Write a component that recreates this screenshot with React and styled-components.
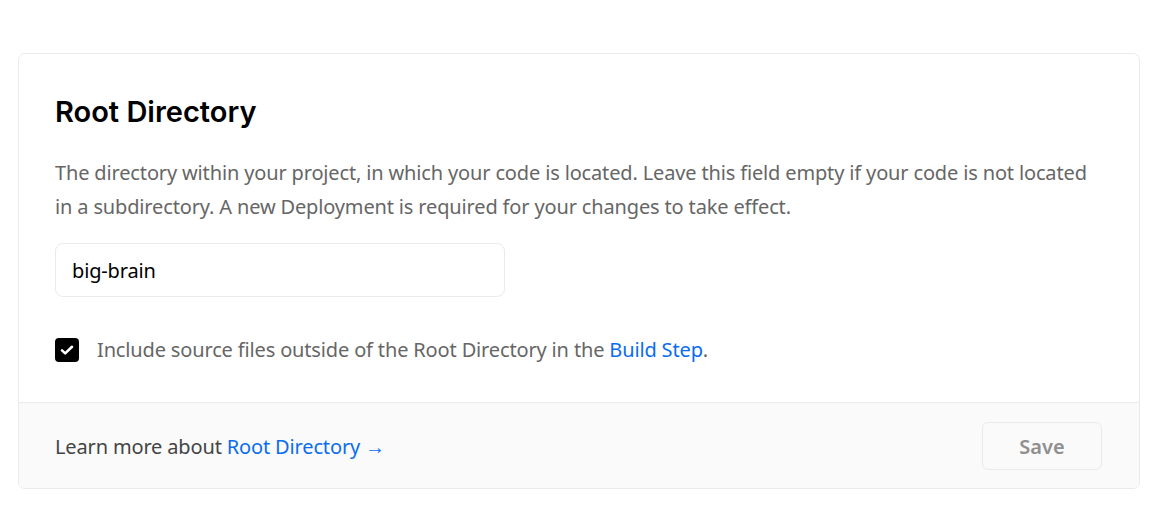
import React, { useState } from "react";
import styled, { createGlobalStyle } from "styled-components";

const GlobalStyle = createGlobalStyle`
	body {
		margin: 0;
		background: #fff;
		font-family: "Noto Sans", "Open Sans", sans-serif;
	}
`;

const Page = styled.div`
	padding: 53px 0 0 18px;
`;

const Card = styled.section`
	width: 1122px;
	box-sizing: border-box;
	border: 1px solid #eaeaea;
	border-radius: 7px;
	overflow: hidden;
	background: #fff;
`;

const Body = styled.div`
	padding: 40px 36px 40px;
	display: flex;
	flex-direction: column;
`;

const Title = styled.h2`
	margin: 0;
	font-family: Inter, "Noto Sans", sans-serif;
	font-size: 29px;
	line-height: 36px;
	font-weight: 600;
	color: #000;
`;

const Description = styled.p`
	margin: 26px 0 0;
	font-size: 20px;
	line-height: 34px;
	letter-spacing: -0.15px;
	color: #666;
`;

const Input = styled.input`
	margin-top: 19px;
	width: 450px;
	height: 54px;
	box-sizing: border-box;
	border: 1px solid #eaeaea;
	border-radius: 8px;
	padding: 0 16px;
	font-family: inherit;
	font-size: 20px;
	letter-spacing: -0.15px;
	color: #000;
	outline: none;
`;

const CheckRow = styled.label`
	margin-top: 41px;
	display: flex;
	align-items: center;
	gap: 18px;
	font-size: 20px;
	line-height: 24px;
	letter-spacing: -0.15px;
	color: #666;
	cursor: pointer;
`;

const Box = styled.span`
	width: 24px;
	height: 24px;
	flex-shrink: 0;
	border-radius: 4px;
	background: ${(p) => (p.checked ? "#000" : "#fff")};
	border: ${(p) => (p.checked ? "none" : "1px solid #ccc")};
	display: flex;
	align-items: center;
	justify-content: center;
`;

const Link = styled.a`
	color: #0a6cf0;
	text-decoration: none;
`;

const Footer = styled.div`
	border-top: 1px solid #eaeaea;
	background: #fafafa;
	padding: 19px 37px 18px 36px;
	display: flex;
	align-items: center;
	justify-content: space-between;
`;

const FooterText = styled.p`
	margin: 0;
	font-size: 20px;
	letter-spacing: -0.15px;
	color: #444;
`;

const SaveButton = styled.button`
	width: 120px;
	height: 48px;
	border: 1px solid #eaeaea;
	border-radius: 6px;
	background: #fafafa;
	color: #8f8f8f;
	font-family: inherit;
	font-size: 20px;
	font-weight: 600;
	cursor: not-allowed;
`;

const App = () => {
	const [value, setValue] = useState("big-brain");
	const [checked, setChecked] = useState(true);

	return (
		<>
			<GlobalStyle />
			<Page>
				<Card>
					<Body>
						<Title>Root Directory</Title>
						<Description>
							The directory within your project, in which your code
							is located. Leave this field empty if your code is not
							located in a subdirectory. A new Deployment is required
							for your changes to take effect.
						</Description>
						<Input
							value={value}
							onChange={(e) => setValue(e.target.value)}
						/>
						<CheckRow onClick={() => setChecked(!checked)}>
							<Box checked={checked}>
								{checked && (
									<svg width="16" height="16" viewBox="0 0 16 16">
										<path
											d="M3 8.4l3.2 3L13 4.8"
											fill="none"
											stroke="#fff"
											strokeWidth="2.6"
											strokeLinecap="round"
											strokeLinejoin="round"
										/>
									</svg>
								)}
							</Box>
							<span>
								Include source files outside of the Root Directory in
								the <Link href="#">Build Step</Link>.
							</span>
						</CheckRow>
					</Body>
					<Footer>
						<FooterText>
							Learn more about <Link href="#">Root Directory →</Link>
						</FooterText>
						<SaveButton disabled>Save</SaveButton>
					</Footer>
				</Card>
			</Page>
		</>
	);
};

export default App;
